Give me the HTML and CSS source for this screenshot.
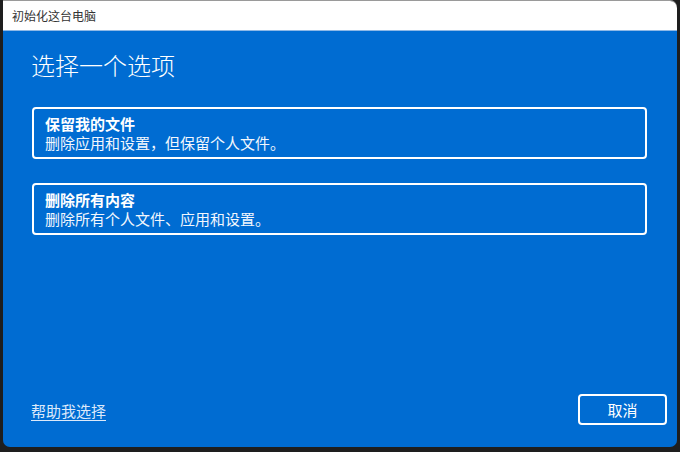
FILE: index.html
```html
<!DOCTYPE html>
<html lang="zh-CN">
<head>
<meta charset="utf-8">
<title>初始化这台电脑</title>
<link rel="stylesheet" href="styles.css">
</head>
<body>
<div class="window">
  <div class="titlebar">初始化这台电脑</div>
  <div class="content">
    <h1 class="heading">选择一个选项</h1>
    <div class="options">
      <div class="option">
        <div class="opt-title">保留我的文件</div>
        <div class="opt-desc">删除应用和设置，但保留个人文件。</div>
      </div>
      <div class="option">
        <div class="opt-title">删除所有内容</div>
        <div class="opt-desc">删除所有个人文件、应用和设置。</div>
      </div>
    </div>
    <div class="footer">
      <a class="help" href="#">帮助我选择</a>
      <button class="cancel">取消</button>
    </div>
  </div>
</div>
</body>
</html>
```

FILE: styles.css
```css
html, body {
  margin: 0;
  padding: 0;
  width: 680px;
  height: 452px;
  overflow: hidden;
  background: #1e1e1e;
  font-family: "Noto Sans CJK SC", "Noto Sans", sans-serif;
}
body {
  padding: 1px 3px 0 3px;
  box-sizing: border-box;
}
.window {
  width: 674px;
  height: 446px;
  display: flex;
  flex-direction: column;
  border-radius: 0 7px 7px 7px;
  overflow: hidden;
  box-shadow: 0 -1px 0 #9a9a9a;
}
.titlebar {
  height: 29px;
  flex: none;
  background: #ffffff;
  color: #333333;
  font-size: 12px;
  line-height: 29px;
  padding-left: 9px;
  border-bottom: 1px solid #8fb9e6;
}
.content {
  flex: 1;
  background: #006cd2;
  display: flex;
  flex-direction: column;
  padding: 0 10px 22px 28px;
  color: #ffffff;
}
.heading {
  margin: 18px 0 0 0;
  font-size: 24px;
  line-height: 32px;
  font-weight: 300;
  letter-spacing: 0;
}
.options {
  display: flex;
  flex-direction: column;
  gap: 24px;
  margin: 26px 20px 0 1px;
}
.option {
  border: 2px solid #ffffff;
  border-radius: 4px;
  padding: 5px 11px;
  font-size: 15px;
  line-height: 19px;
}
.opt-title {
  font-weight: 700;
}
.opt-desc {
  font-weight: 400;
  color: #f2f7fd;
}
.footer {
  margin-top: auto;
  display: flex;
  align-items: center;
  justify-content: space-between;
}
.help {
  color: #dce9fa;
  font-size: 15px;
  text-decoration: underline;
  text-underline-offset: 3px;
  margin-top: 1px;
}
.cancel {
  width: 89px;
  height: 31px;
  border: 2px solid #ffffff;
  border-radius: 4px;
  background: transparent;
  color: #ffffff;
  font-family: "Noto Sans CJK SC", "Noto Sans", sans-serif;
  font-size: 15px;
  padding: 0;
}
```
